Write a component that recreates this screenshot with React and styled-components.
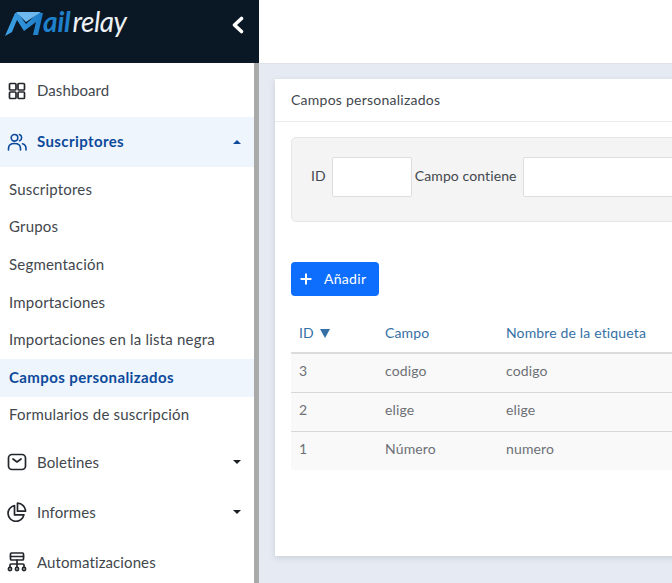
import React from 'react'
import styled, { createGlobalStyle } from 'styled-components'
import { Plus } from 'lucide-react'

const GlobalStyle = createGlobalStyle`
  html, body { margin: 0; padding: 0; height: 100%; overflow: hidden; }
  body { font-family: Lato, "Noto Sans", sans-serif; color: #42474d; }
  * { box-sizing: border-box; }
`

const Page = styled.div`
  display: flex;
  width: 672px;
  height: 583px;
  overflow: hidden;
  background: #e6eaf2;
`

const Side = styled.aside`
  flex: 0 0 259px;
  display: flex;
  flex-direction: column;
  height: 583px;
`

const Brand = styled.div`
  flex: 0 0 63px;
  background: #0a1725;
  display: flex;
  align-items: flex-start;
  justify-content: space-between;
  padding: 5px 14px 0 5px;
`

const Logo = styled.div`
  display: flex;
  align-items: baseline;
  height: 32px;
  font-family: Lato, sans-serif;
  font-style: italic;
  font-size: 28px;
  line-height: 32px;
  letter-spacing: -0.2px;
  svg { align-self: flex-start; margin-top: 6px; }
`

const LogoBlue = styled.span`
  color: #1f80cc;
  font-weight: 700;
  margin-left: 0;
`

const LogoWhite = styled.span`
  color: #eef2f5;
  font-weight: 400;
  margin-left: 2px;
  letter-spacing: -0.5px;
`

const Collapse = styled.button`
  border: 0;
  padding: 0;
  margin-top: 11px;
  background: none;
  display: flex;
`

const SideBody = styled.div`
  flex: 1;
  display: flex;
  min-height: 0;
`

const Menu = styled.nav`
  flex: 0 0 254px;
  background: #fff;
  padding-top: 3px;
  overflow: hidden;
`

const Scroll = styled.div`
  flex: 0 0 5px;
  background: #a9a9a9;
`

const MenuItem = styled.div`
  height: 50px;
  display: flex;
  align-items: center;
  padding: 0 13px 0 7px;
  font-size: 15px;
  letter-spacing: ${p => (p.$open ? '0.4px' : '0.1px')};
  margin-top: ${p => (p.$open ? '1px' : '0')};
  background: ${p => (p.$open ? '#eef5fd' : 'transparent')};
  color: ${p => (p.$open ? '#0d4a9b' : '#42474d')};
  font-weight: ${p => (p.$open ? 700 : 400)};
`

const MenuIcon = styled.span`
  flex: 0 0 30px;
  display: flex;
`

const MenuLabel = styled.span`
  flex: 1;
  margin-bottom: ${p => p.$lift || 0}px;
`

const Caret = styled.span`
  width: 0;
  height: 0;
  border-left: 4px solid transparent;
  border-right: 4px solid transparent;
  border-top: ${p => (p.$up ? '0' : '4px solid #1b2026')};
  border-bottom: ${p => (p.$up ? '4px solid #0d4a9b' : '0')};
`

const SubMenu = styled.div`
  padding: 4px 0 3px;
`

const SubItem = styled.div`
  height: 37.6px;
  display: flex;
  align-items: center;
  padding: 0 0 2px 9px;
  font-size: 15px;
  letter-spacing: ${p => (p.$active ? '0.4px' : '0.2px')};
  background: ${p => (p.$active ? '#eef5fd' : 'transparent')};
  color: ${p => (p.$active ? '#0d4a9b' : '#42474d')};
  font-weight: ${p => (p.$active ? 700 : 400)};
`

const Main = styled.main`
  flex: 1;
  min-width: 0;
  display: flex;
  flex-direction: column;
`

const TopBar = styled.div`
  flex: 0 0 64px;
  background: #fff;
  border-bottom: 1px solid #dfe2e8;
`

const Content = styled.div`
  flex: 1;
  padding: 15px 0 27px 16px;
  min-height: 0;
`

const Card = styled.section`
  width: 520px;
  height: 100%;
  background: #fff;
  box-shadow: 0 2px 6px rgba(60, 70, 90, 0.16);
`

const CardHeader = styled.div`
  height: 43px;
  display: flex;
  align-items: center;
  padding: 0 0 1px 16px;
  border-bottom: 1px solid #e9ebee;
  font-size: 14px;
  letter-spacing: 0.25px;
  color: #42474d;
`

const CardBody = styled.div`
  padding: 15px 16px;
`

const Filter = styled.div`
  height: 85px;
  display: flex;
  align-items: center;
  padding: 0 0 5px 19px;
  background: #f4f4f4;
  border: 1px solid #e6e6e6;
  border-radius: 5px;
`

const FilterLabel = styled.label`
  font-size: 14px;
  letter-spacing: 0.1px;
  margin: 0 ${p => p.$gap}px 3px 0;
  color: #42474d;
`

const FilterInput = styled.div`
  flex: 0 0 ${p => p.$w}px;
  height: 40px;
  background: #fff;
  border: 1px solid #dedede;
  border-radius: 2px;
  margin-right: ${p => p.$gap}px;
`

const AddButton = styled.button`
  margin-top: 40px;
  width: 88px;
  height: 34px;
  display: flex;
  align-items: center;
  gap: 10px;
  padding: 0 0 1px 7px;
  border: 0;
  border-radius: 4px;
  background: #0d6efd;
  color: #fff;
  font-family: inherit;
  font-size: 14px;
  letter-spacing: 0.3px;
`

const Table = styled.table`
  width: 100%;
  margin-top: 19px;
  border-collapse: collapse;
  table-layout: fixed;
  font-size: 14px;
  letter-spacing: 0.15px;
`

const HeadCell = styled.th`
  height: 38px;
  padding: 0 0 2px 8px;
  width: ${p => p.$w}px;
  text-align: left;
  font-weight: 400;
  color: #3570a5;
  border-bottom: 2px solid #dcdcdc;
`

const Row = styled.tr`
  height: 39px;
  background: #f9f9f9;
  border-bottom: ${p => (p.$last ? '0' : '1px solid #d9d9d9')};
`

const Cell = styled.td`
  padding: 0 0 4px 8px;
  color: #6d7076;
`

const SortArrow = styled.span`
  display: inline-block;
  margin-left: 6px;
  width: 0;
  height: 0;
  border-left: 5px solid transparent;
  border-right: 5px solid transparent;
  border-top: 9px solid #3570a5;
`

const Stroke = ({ children }) => (
  <svg width="20" height="20" viewBox="0 0 20 20" fill="none" stroke="#23272c" strokeWidth="1.7" strokeLinecap="round" strokeLinejoin="round">
    {children}
  </svg>
)

const GridIcon = () => (
  <Stroke>
    <rect x="2.5" y="2.5" width="6.5" height="6.5" rx="1" />
    <rect x="11" y="2.5" width="6.5" height="6.5" rx="1" />
    <rect x="2.5" y="11" width="6.5" height="6.5" rx="1" />
    <rect x="11" y="11" width="6.5" height="6.5" rx="1" />
  </Stroke>
)

const UsersIcon = () => (
  <svg width="20" height="20" viewBox="0 0 20 20" fill="none" stroke="#0d4a9b" strokeWidth="1.6" strokeLinecap="round">
    <circle cx="7.5" cy="5.8" r="3.3" />
    <path d="M1.5 18v-1.5c0-3 2.4-5 6-5s6 2 6 5V18" />
    <path d="M12.5 2.6a3.3 3.3 0 0 1 0 6.2" />
    <path d="M15.5 11.8c2.2.6 3.5 2.4 3.5 4.7V18" />
  </svg>
)

const MailIcon = () => (
  <Stroke>
    <rect x="1.5" y="2.5" width="17" height="15" rx="3.5" />
    <path d="M6 7l4 3 4-3" />
  </Stroke>
)

const PieIcon = () => (
  <Stroke>
    <path d="M7.5 3.5a8 8 0 1 0 9.4 9.4H7.5z" />
    <path d="M10.5 1.2a8 8 0 0 1 8 8h-8z" />
  </Stroke>
)

const FlowIcon = () => (
  <Stroke>
    <rect x="3.5" y="1" width="13" height="7" rx="1" />
    <path d="M3.5 4.5h13M10 8v7M3 15v-2a1 1 0 0 1 1-1h12a1 1 0 0 1 1 1v2" />
    <circle cx="3" cy="17" r="1.6" />
    <circle cx="10" cy="17" r="1.6" />
    <circle cx="17" cy="17" r="1.6" />
  </Stroke>
)

const subItems = [
  'Suscriptores',
  'Grupos',
  'Segmentación',
  'Importaciones',
  'Importaciones en la lista negra',
  'Campos personalizados',
  'Formularios de suscripción',
]

const rows = [
  ['3', 'codigo', 'codigo'],
  ['2', 'elige', 'elige'],
  ['1', 'Número', 'numero'],
]

export default function App() {
  return (
    <Page>
      <GlobalStyle />
      <Side>
        <Brand>
          <Logo>
            <svg width="38" height="27" viewBox="0 0 38 27">
              <defs>
                <linearGradient id="mailBlue" x1="0" y1="0" x2="1" y2="0">
                  <stop offset="0" stopColor="#3fa3e6" />
                  <stop offset="1" stopColor="#1c7cc8" />
                </linearGradient>
              </defs>
              <path d="M0 25L10 2h3l8 11L33 2h5l-5 22h-5l3-13-12 9L12 9 7 21z" fill="url(#mailBlue)" />
              <path d="M11 1h25L21 11z" fill="#6db8ec" />
            </svg>
            <LogoBlue>ail</LogoBlue>
            <LogoWhite>relay</LogoWhite>
          </Logo>
          <Collapse>
            <svg width="14" height="18" viewBox="0 0 14 18" fill="none" stroke="#fff" strokeWidth="3.6" strokeLinecap="round" strokeLinejoin="round">
              <path d="M10.5 2.5L3.5 9l7 6.5" />
            </svg>
          </Collapse>
        </Brand>
        <SideBody>
          <Menu>
            <MenuItem>
              <MenuIcon><GridIcon /></MenuIcon>
              <MenuLabel $lift={2}>Dashboard</MenuLabel>
            </MenuItem>
            <MenuItem $open>
              <MenuIcon><UsersIcon /></MenuIcon>
              <MenuLabel $lift={3}>Suscriptores</MenuLabel>
              <Caret $up />
            </MenuItem>
            <SubMenu>
              {subItems.map(name => (
                <SubItem key={name} $active={name === 'Campos personalizados'}>{name}</SubItem>
              ))}
            </SubMenu>
            <MenuItem>
              <MenuIcon><MailIcon /></MenuIcon>
              <MenuLabel>Boletines</MenuLabel>
              <Caret />
            </MenuItem>
            <MenuItem>
              <MenuIcon><PieIcon /></MenuIcon>
              <MenuLabel>Informes</MenuLabel>
              <Caret />
            </MenuItem>
            <MenuItem>
              <MenuIcon><FlowIcon /></MenuIcon>
              <MenuLabel>Automatizaciones</MenuLabel>
            </MenuItem>
          </Menu>
          <Scroll />
        </SideBody>
      </Side>
      <Main>
        <TopBar />
        <Content>
          <Card>
            <CardHeader>Campos personalizados</CardHeader>
            <CardBody>
              <Filter>
                <FilterLabel $gap={6}>ID</FilterLabel>
                <FilterInput $w={80} $gap={3} />
                <FilterLabel $gap={6}>Campo contiene</FilterLabel>
                <FilterInput $w={200} $gap={0} />
              </Filter>
              <AddButton>
                <Plus size={16} strokeWidth={3} />
                Añadir
              </AddButton>
              <Table>
                <thead>
                  <tr>
                    <HeadCell $w={86}>ID<SortArrow /></HeadCell>
                    <HeadCell $w={121}>Campo</HeadCell>
                    <HeadCell>Nombre de la etiqueta</HeadCell>
                  </tr>
                </thead>
                <tbody>
                  {rows.map((r, i) => (
                    <Row key={r[0]} $last={i === rows.length - 1}>
                      <Cell>{r[0]}</Cell>
                      <Cell>{r[1]}</Cell>
                      <Cell>{r[2]}</Cell>
                    </Row>
                  ))}
                </tbody>
              </Table>
            </CardBody>
          </Card>
        </Content>
      </Main>
    </Page>
  )
}
